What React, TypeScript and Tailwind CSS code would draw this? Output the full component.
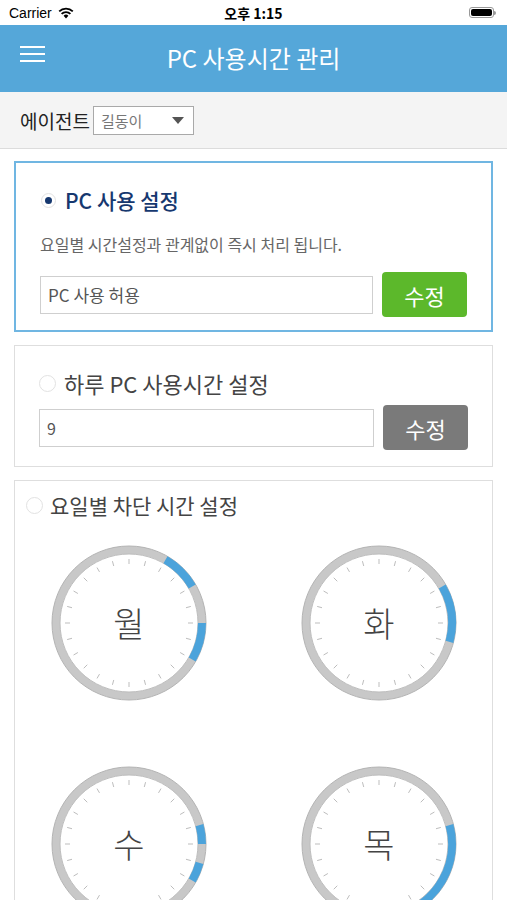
import React from "react";

const font = { fontFamily: '"Noto Sans CJK KR", "Noto Sans", sans-serif' };

function pt(cx: number, cy: number, r: number, deg: number) {
  const a = (deg * Math.PI) / 180;
  return [cx + r * Math.sin(a), cy - r * Math.cos(a)];
}

function arc(cx: number, cy: number, r: number, a1: number, a2: number) {
  const [x1, y1] = pt(cx, cy, r, a1);
  const [x2, y2] = pt(cx, cy, r, a2);
  const large = a2 - a1 > 180 ? 1 : 0;
  return `M ${x1} ${y1} A ${r} ${r} 0 ${large} 1 ${x2} ${y2}`;
}

function Clock({ label, ranges }: { label: string; ranges: [number, number][] }) {
  const c = 80;
  const ticks = Array.from({ length: 24 }, (_, i) => i * 15);
  return (
    <div className="relative w-[160px] h-[160px] flex items-center justify-center">
      <svg width="160" height="160" viewBox="0 0 160 160" className="absolute inset-0">
        <circle cx={c} cy={c} r={73} fill="white" stroke="#c8c8c8" strokeWidth={8} />
        <circle cx={c} cy={c} r={77} fill="none" stroke="#b4b4b4" strokeWidth={1} />
        <circle cx={c} cy={c} r={69} fill="none" stroke="#bdbdbd" strokeWidth={1} />
        {ranges.map(([a, b], i) => (
          <path key={i} d={arc(c, c, 73, a, b)} fill="none" stroke="#4ba3db" strokeWidth={8} />
        ))}
        {ticks.map((d) => {
          const [x1, y1] = pt(c, c, 59, d);
          const [x2, y2] = pt(c, c, 64, d);
          return <line key={d} x1={x1} y1={y1} x2={x2} y2={y2} stroke="#bdbdbd" strokeWidth={1} />;
        })}
      </svg>
      <span className="relative text-[34px] text-[#444] font-light leading-none" style={font}>
        {label}
      </span>
    </div>
  );
}

function Radio({ checked, size = "w-[15px] h-[15px]" }: { checked?: boolean; size?: string }) {
  return (
    <span className={`${size} rounded-full border border-[#e2e2e2] bg-white flex items-center justify-center`}>
      {checked && <span className="w-[7px] h-[7px] rounded-full bg-[#16386f]" />}
    </span>
  );
}

export default function App() {
  return (
    <div className="w-[507px] h-[900px] overflow-hidden bg-white" style={font}>
      {/* status bar */}
      <div className="h-[25px] flex items-center justify-between px-[9px] relative">
        <div className="flex items-center gap-[6px]">
          <span className="text-[14px] text-black leading-none" style={{ fontFamily: '"Liberation Sans", sans-serif' }}>
            Carrier
          </span>
          <svg width="16" height="12" viewBox="0 0 16 12">
            <path d="M8 11.5 L5.6 8.8 A3.4 3.4 0 0 1 10.4 8.8 Z" fill="black" />
            <path d="M3.6 6.9 A6.2 6.2 0 0 1 12.4 6.9" fill="none" stroke="black" strokeWidth="1.8" />
            <path d="M1.2 4.4 A9.6 9.6 0 0 1 14.8 4.4" fill="none" stroke="black" strokeWidth="1.8" />
          </svg>
        </div>
        <span className="absolute left-1/2 -translate-x-1/2 text-[14px] font-bold text-black leading-none">
          오후 1:15
        </span>
        <div className="flex items-center mr-[2px]">
          <div className="w-[25px] h-[11px] rounded-[3px] border border-[#999] p-[1px]">
            <div className="w-full h-full rounded-[2px] bg-black" />
          </div>
          <div className="w-[2px] h-[4px] bg-[#999] rounded-r-sm" />
        </div>
      </div>

      {/* header */}
      <div className="h-[67px] bg-[#55a7d9] relative flex items-center justify-center">
        <div className="absolute left-[20px] top-[21px] flex flex-col gap-[5px]">
          <span className="block w-[25px] h-[2px] bg-white" />
          <span className="block w-[25px] h-[2px] bg-white" />
          <span className="block w-[25px] h-[2px] bg-white" />
        </div>
        <span className="text-white text-[24px] leading-none -mt-[2px]">PC 사용시간 관리</span>
      </div>

      {/* agent row */}
      <div className="h-[57px] bg-[#f4f4f4] border-b border-[#dcdcdc] flex items-center pl-[20px] gap-[3px]">
        <span className="text-[19px] text-[#222] leading-none">에이전트</span>
        <div className="w-[101px] h-[29px] bg-white border border-[#a9a9a9] flex items-center justify-between pl-[7px] pr-[9px]">
          <span className="text-[15px] text-[#777] leading-none">길동이</span>
          <svg width="12" height="7" viewBox="0 0 12 7">
            <path d="M0 0 L12 0 L6 7 Z" fill="#555" />
          </svg>
        </div>
      </div>

      {/* content */}
      <div className="px-[14px] pt-[12px] flex flex-col gap-[13px]">
        {/* card 1 */}
        <div className="h-[171px] border-2 border-[#70b6e2] pl-[24px] pr-[24px] pt-[25px]">
          <div className="flex items-center gap-[9px] ml-[1px] h-[24px]">
            <Radio checked />
            <span className="text-[21px] font-medium text-[#16386f] leading-none">PC 사용 설정</span>
          </div>
          <div className="mt-[24px] text-[16px] text-[#666] leading-none">
            요일별 시간설정과 관계없이 즉시 처리 됩니다.
          </div>
          <div className="mt-[20px] flex items-center gap-[9px]">
            <div className="w-[334px] h-[38px] border border-[#cfcfcf] flex items-center pl-[7px]">
              <span className="text-[17px] text-[#555] leading-none">PC 사용 허용</span>
            </div>
            <div className="w-[85px] h-[45px] rounded-[4px] bg-[#5cb82b] flex items-center justify-center">
              <span className="text-white text-[22px] leading-none">수정</span>
            </div>
          </div>
        </div>

        {/* card 2 */}
        <div className="h-[122px] border border-[#dedede] pl-[24px] pr-[24px] pt-[25px]">
          <div className="flex items-center gap-[8px] h-[24px]">
            <Radio size="w-[17px] h-[17px]" />
            <span className="text-[22px] text-[#444] leading-none">하루 PC 사용시간 설정</span>
          </div>
          <div className="mt-[10px] flex items-center gap-[9px]">
            <div className="w-[336px] h-[38px] border border-[#cfcfcf] flex items-center pl-[7px]">
              <span className="text-[16px] text-[#555] leading-none">9</span>
            </div>
            <div className="w-[85px] h-[45px] rounded-[4px] bg-[#7a7a7a] flex items-center justify-center">
              <span className="text-white text-[22px] leading-none">수정</span>
            </div>
          </div>
        </div>

        {/* card 3 */}
        <div className="h-[460px] border border-[#dedede] pl-[11px] pt-[12px]">
          <div className="flex items-center gap-[7px] h-[24px]">
            <Radio size="w-[17px] h-[17px]" />
            <span className="text-[21px] text-[#444] leading-none">요일별 차단 시간 설정</span>
          </div>
          <div className="mt-[26px] ml-[23px] grid grid-cols-[160px_160px] gap-x-[90px] gap-y-[61px]">
            <Clock label="월" ranges={[[30, 60], [90, 120]]} />
            <Clock label="화" ranges={[[60, 105]]} />
            <Clock label="수" ranges={[[75, 90], [105, 120]]} />
            <Clock label="목" ranges={[[75, 165]]} />
          </div>
        </div>
      </div>
    </div>
  );
}
